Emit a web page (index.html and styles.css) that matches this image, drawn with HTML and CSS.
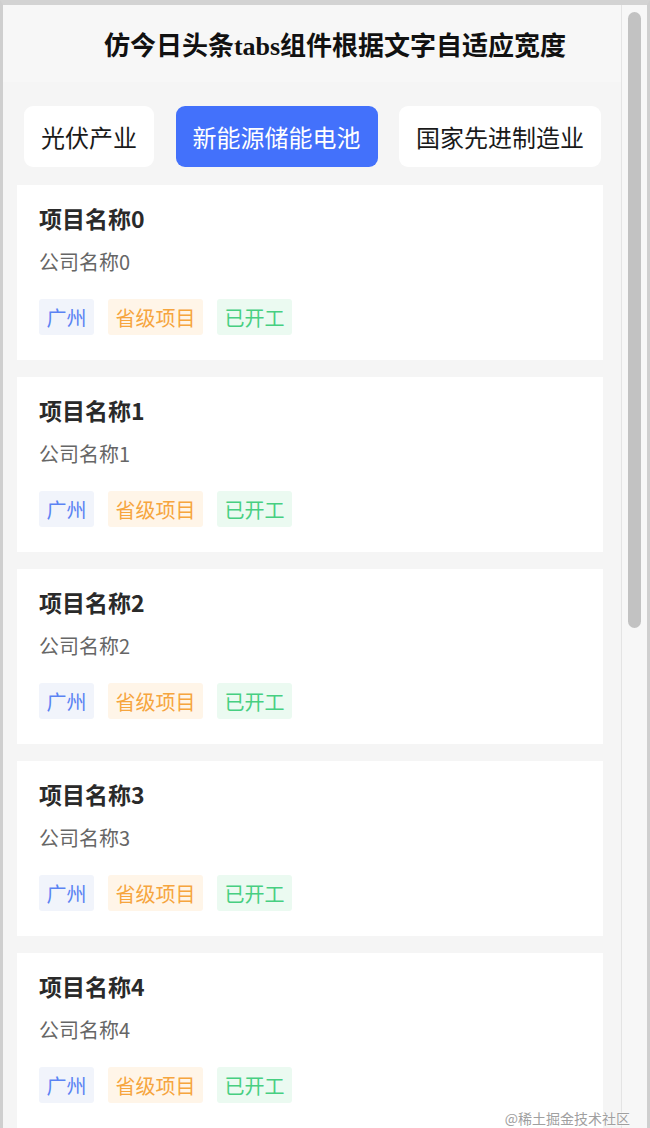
FILE: index.html
```html
<!DOCTYPE html>
<html lang="zh-CN">
<head>
<meta charset="utf-8">
<title>仿今日头条tabs组件根据文字自适应宽度</title>
<link rel="stylesheet" href="styles.css">
</head>
<body>
<div class="window">
  <div class="page">
    <header class="header">
      <h1 class="title">仿今日头条tabs组件根据文字自适应宽度</h1>
    </header>
    <main class="content">
      <nav class="tabs">
        <div class="tab">光伏产业</div>
        <div class="tab active">新能源储能电池</div>
        <div class="tab">国家先进制造业</div>
      </nav>
      <section class="list">
        <article class="card">
          <h2 class="card-title">项目名称0</h2>
          <p class="company">公司名称0</p>
          <div class="tags"><span class="tag blue">广州</span><span class="tag orange">省级项目</span><span class="tag green">已开工</span></div>
        </article>
        <article class="card">
          <h2 class="card-title">项目名称1</h2>
          <p class="company">公司名称1</p>
          <div class="tags"><span class="tag blue">广州</span><span class="tag orange">省级项目</span><span class="tag green">已开工</span></div>
        </article>
        <article class="card">
          <h2 class="card-title">项目名称2</h2>
          <p class="company">公司名称2</p>
          <div class="tags"><span class="tag blue">广州</span><span class="tag orange">省级项目</span><span class="tag green">已开工</span></div>
        </article>
        <article class="card">
          <h2 class="card-title">项目名称3</h2>
          <p class="company">公司名称3</p>
          <div class="tags"><span class="tag blue">广州</span><span class="tag orange">省级项目</span><span class="tag green">已开工</span></div>
        </article>
        <article class="card">
          <h2 class="card-title">项目名称4</h2>
          <p class="company">公司名称4</p>
          <div class="tags"><span class="tag blue">广州</span><span class="tag orange">省级项目</span><span class="tag green">已开工</span></div>
        </article>
      </section>
    </main>
  </div>
  <div class="scrollbar"><div class="thumb"></div></div>
  <div class="watermark">@稀土掘金技术社区</div>
</div>
</body>
</html>
```

FILE: styles.css
```css
html, body {
  margin: 0;
  padding: 0;
  background: #d6d6d6;
}
body {
  width: 650px;
  height: 1128px;
  overflow: hidden;
  font-family: "Noto Sans CJK SC", "Noto Sans", sans-serif;
}
.window {
  position: relative;
  box-sizing: border-box;
  width: 650px;
  height: 1128px;
  border-top: 5px solid #d3d3d3;
  border-left: 3px solid #cfcfcf;
  border-right: 3px solid #cfcfcf;
  display: flex;
  overflow: hidden;
  background: #f5f5f5;
}
.page {
  width: 618px;
  flex: none;
  background: #f5f5f5;
}
.header {
  height: 77px;
  background: #f7f7f7;
  display: flex;
  align-items: center;
  justify-content: center;
  padding-left: 46px;
}
.title {
  margin: 0;
  font-family: "Liberation Serif", "Noto Sans CJK SC", serif;
  font-weight: bold;
  font-size: 26px;
  color: #111;
}
.content {
  padding: 24px 0 0 14px;
}
.tabs {
  display: flex;
  gap: 21.5px;
  padding-left: 7px;
  margin-bottom: 18px;
}
.tab {
  height: 61px;
  padding: 0 17px;
  display: flex;
  align-items: center;
  background: #fff;
  border-radius: 9px;
  font-size: 24px;
  color: #1a1a1a;
  white-space: nowrap;
}
.tab.active {
  background: #4371fb;
  color: #fff;
}
.list {
  display: flex;
  flex-direction: column;
  gap: 17px;
  width: 586px;
}
.card {
  background: #fff;
  padding: 18px 22px 25px;
}
.card-title {
  margin: 0;
  font-size: 23px;
  line-height: 30px;
  font-weight: bold;
  color: #2a2a2a;
}
.company {
  margin: 15px 0 23px;
  font-size: 20px;
  line-height: 28px;
  color: #666;
}
.tags {
  display: flex;
  gap: 14px;
}
.tag {
  height: 36px;
  padding: 0 7.5px;
  display: flex;
  align-items: center;
  border-radius: 3px;
  font-size: 20px;
  font-weight: 400;
}
.tag.blue { background: #f1f4fb; color: #5b83f3; }
.tag.orange { background: #fff5e8; color: #f6a53e; }
.tag.green { background: #ebfaf1; color: #47cf81; }
.scrollbar {
  flex: 1;
  background: #f7f7f7;
  border-left: 1px solid #e4e4e4;
  padding: 7px 5px 0 6px;
}
.thumb {
  width: 13px;
  height: 616px;
  background: #c2c2c2;
  border-radius: 7px;
}
.watermark {
  position: absolute;
  right: 17px;
  top: 1105px;
  font-size: 14px;
  line-height: 16px;
  color: #a0a0a0;
  text-shadow: 0 0 2px #fff, 0 0 2px #fff;
}
```
